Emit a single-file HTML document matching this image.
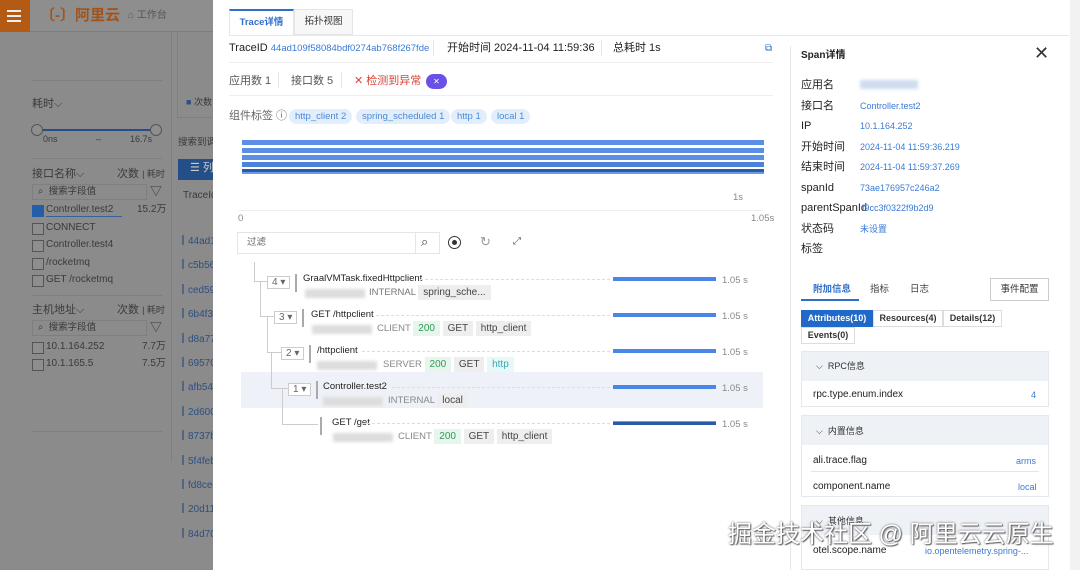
<!DOCTYPE html>
<html><head><meta charset="utf-8"><style>
*{margin:0;padding:0;box-sizing:border-box}
body{width:1080px;height:570px;overflow:hidden;position:relative;background:#8b8b8b;font-family:"Liberation Sans","Noto Sans CJK SC",sans-serif;font-size:11px;color:#333}
.a{position:absolute;white-space:nowrap;line-height:1.2}
.g{color:#3a3a3a}
.cb{width:12px;height:12px;border:1px solid #555;background:#8e8e8e}
.tag{background:#e3eefc;color:#4a8ad8;border-radius:10px;padding:2px 6px;font-size:9.5px}
.pill{background:#eee;color:#444;padding:2px 5px;font-size:10px}
.bar{position:absolute;left:613px;width:103px;height:4px;background:#4a86e8}
.dur{position:absolute;left:722px;color:#888;font-size:9.5px}
.dash{position:absolute;border-top:1px dashed #ddd;height:0}
.cnt{position:absolute;border:1px solid #ccc;font-size:10px;color:#666;padding:0 4px;height:13px;line-height:12px;background:#fff}
.blur{position:absolute;height:9px;background:#ddd;filter:blur(1.5px)}
.k{position:absolute;left:801px;font-size:11px;color:#222;line-height:14px}
.v{position:absolute;left:860px;font-size:9px;color:#3a7bd5;line-height:14px}
</style></head><body>
<div class="a" style="left:0;top:0;width:30px;height:32px;background:#b35a14"></div>
<div class="a" style="left:7px;top:10px;width:14px;height:2px;background:#eee;box-shadow:0 5px 0 #eee,0 10px 0 #eee"></div>
<div class="a" style="left:30px;top:0;width:183px;height:32px;background:#8e8e8e;border-bottom:1px solid #7d7d7d"></div>
<div class="a" style="left:40px;top:7px;font-size:15px;color:#a3531a;font-weight:bold">〔-〕阿里云</div>
<div class="a" style="left:128px;top:10px;color:#555;font-size:10px">⌂ 工作台</div>
<div class="a" style="left:32px;top:80px;width:130px;border-top:1px solid #7f7f7f"></div>
<div class="a g" style="left:32px;top:98px">耗时⌵</div>
<div class="a" style="left:37px;top:129px;width:120px;height:2px;background:#244e87"></div>
<div class="a" style="left:31px;top:124px;width:12px;height:12px;border-radius:50%;border:1px solid #555;background:#8e8e8e"></div>
<div class="a" style="left:150px;top:124px;width:12px;height:12px;border-radius:50%;border:1px solid #555;background:#8e8e8e"></div>
<div class="a g" style="left:43px;top:134px;font-size:9px">0ns</div>
<div class="a g" style="left:96px;top:134px;font-size:9px">–</div>
<div class="a g" style="left:130px;top:134px;font-size:9px">16.7s</div>
<div class="a" style="left:32px;top:158px;width:130px;border-top:1px solid #7f7f7f"></div>
<div class="a g" style="left:32px;top:168px">接口名称⌵</div>
<div class="a g" style="left:117px;top:168px">次数 <span style="font-size:9px">| 耗时</span></div>
<div class="a" style="left:32px;top:184px;width:115px;height:16px;border:1px solid #7f7f7f"></div>
<div class="a g" style="left:38px;top:186px;font-size:9.5px">⌕ &nbsp;搜索字段值</div>
<div class="a g" style="left:150px;top:184px;font-size:12px">▽</div>
<div class="a cb" style="left:32px;top:205px;background:#245ea6;border-color:#245ea6"></div>
<div class="a g" style="left:46px;top:204px;font-size:10px">Controller.test2</div><div class="a" style="left:46px;top:216px;width:76px;height:1px;background:#3a5f9a"></div>
<div class="a g" style="left:137px;top:204px;font-size:10px">15.2万</div>
<div class="a cb" style="left:32px;top:223px"></div><div class="a g" style="left:46px;top:222px;font-size:10px">CONNECT</div>
<div class="a cb" style="left:32px;top:240px"></div><div class="a g" style="left:46px;top:239px;font-size:10px">Controller.test4</div>
<div class="a cb" style="left:32px;top:258px"></div><div class="a g" style="left:46px;top:257px;font-size:10px">/rocketmq</div>
<div class="a cb" style="left:32px;top:275px"></div><div class="a g" style="left:46px;top:274px;font-size:10px">GET /rocketmq</div>
<div class="a" style="left:32px;top:295px;width:130px;border-top:1px solid #7f7f7f"></div>
<div class="a g" style="left:32px;top:304px">主机地址⌵</div>
<div class="a g" style="left:117px;top:304px">次数 <span style="font-size:9px">| 耗时</span></div>
<div class="a" style="left:32px;top:320px;width:115px;height:16px;border:1px solid #7f7f7f"></div>
<div class="a g" style="left:38px;top:322px;font-size:9.5px">⌕ &nbsp;搜索字段值</div>
<div class="a g" style="left:150px;top:320px;font-size:12px">▽</div>
<div class="a cb" style="left:32px;top:342px"></div><div class="a g" style="left:46px;top:341px;font-size:10px">10.1.164.252</div><div class="a g" style="left:142px;top:341px;font-size:10px">7.7万</div>
<div class="a cb" style="left:32px;top:359px"></div><div class="a g" style="left:46px;top:358px;font-size:10px">10.1.165.5</div><div class="a g" style="left:142px;top:358px;font-size:10px">7.5万</div>
<div class="a" style="left:32px;top:431px;width:130px;border-top:1px solid #7f7f7f"></div>
<div class="a" style="left:171px;top:32px;width:1px;height:430px;background:#7f7f7f"></div>
<div class="a" style="left:177px;top:32px;width:36px;height:86px;border-left:1px solid #7f7f7f;border-bottom:1px solid #7f7f7f"></div>
<div class="a g" style="left:186px;top:97px;font-size:9px"><span style="color:#2d4f80">■</span> 次数</div>
<div class="a g" style="left:178px;top:137px;font-size:9.5px">搜索到调</div>
<div class="a" style="left:178px;top:159px;width:35px;height:21px;background:#244e87;color:#ccc;padding:3px 0 0 12px">☰ 列</div>
<div class="a g" style="left:183px;top:190px;font-size:10px">TraceId</div>
<div class="a" style="left:178px;top:230px;width:35px;font-size:10px;line-height:24.4px;color:#2d4f80;">
<div>┃44ad1</div><div>┃c5b56</div><div>┃ced59</div><div>┃6b4f3</div><div>┃d8a77</div><div>┃69570</div><div>┃afb54</div><div>┃2d600</div><div>┃8737b</div><div>┃5f4feb</div><div>┃fd8ce</div><div>┃20d11</div><div>┃84d70</div></div>

<div class="a" style="left:213px;top:0;width:867px;height:570px;background:#fff"></div>
<div class="a" style="left:1070px;top:0;width:10px;height:570px;background:#f2f2f2"></div>
<div class="a" style="left:229px;top:35px;width:840px;border-top:1px solid #e8e8e8"></div>
<div class="a" style="left:229px;top:9px;width:65px;height:26px;border:1px solid #e5e5e5;border-top:2px solid #2f6fc9;border-bottom:none;background:#fff;color:#2f6fc9;font-size:9.5px;font-weight:bold;text-align:center;line-height:24px">Trace详情</div>
<div class="a" style="left:294px;top:9px;width:59px;height:26px;border:1px solid #e5e5e5;background:#f7f7f7;font-size:9.5px;text-align:center;line-height:24px">拓扑视图</div>
<div class="a" style="left:229px;top:42px;font-size:11px;color:#222">TraceID <span style="color:#3a7bd5;font-size:9.5px">44ad109f58084bdf0274ab768f267fde</span></div>
<div class="a" style="left:433px;top:40px;height:16px;border-left:1px solid #e5e5e5"></div>
<div class="a" style="left:447px;top:42px;font-size:11px;color:#222">开始时间 2024-11-04 11:59:36</div>
<div class="a" style="left:601px;top:40px;height:16px;border-left:1px solid #e5e5e5"></div>
<div class="a" style="left:613px;top:42px;font-size:11px;color:#222">总耗时 1s</div>
<div class="a" style="left:765px;top:43px;color:#2f6fc9;font-size:10px">⧉</div>
<div class="a" style="left:229px;top:62px;width:544px;border-top:1px solid #eee"></div>
<div class="a" style="left:229px;top:75px;font-size:11px;color:#555">应用数 1</div>
<div class="a" style="left:278px;top:72px;height:16px;border-left:1px solid #e5e5e5"></div>
<div class="a" style="left:291px;top:75px;font-size:11px;color:#555">接口数 5</div>
<div class="a" style="left:341px;top:72px;height:16px;border-left:1px solid #e5e5e5"></div>
<div class="a" style="left:354px;top:75px;font-size:11px;color:#d9433a">✕ 检测到异常</div>
<div class="a" style="left:426px;top:74px;width:21px;height:15px;border-radius:8px;background:#6a50e6;color:#fff;font-size:8px;text-align:center;line-height:15px">✕</div>
<div class="a" style="left:229px;top:95px;width:544px;border-top:1px solid #eee"></div>
<div class="a" style="left:229px;top:110px;font-size:11px;color:#666">组件标签 ⓘ</div>
<div class="a tag" style="left:289px;top:109px">http_client 2</div>
<div class="a tag" style="left:356px;top:109px">spring_scheduled 1</div>
<div class="a tag" style="left:451px;top:109px">http 1</div>
<div class="a tag" style="left:491px;top:109px">local 1</div>
<div class="a" style="left:242px;top:140px;width:522px;height:5px;background:#5b8fe6"></div>
<div class="a" style="left:242px;top:148px;width:522px;height:5px;background:#5b8fe6"></div>
<div class="a" style="left:242px;top:155px;width:522px;height:5px;background:#5b8fe6"></div>
<div class="a" style="left:242px;top:162px;width:522px;height:5px;background:#4d82dc"></div>
<div class="a" style="left:242px;top:169px;width:522px;height:3px;background:#2b5aa8"></div>
<div class="a" style="left:242px;top:172px;width:522px;height:2px;background:#6b9be8"></div>
<div class="a" style="left:733px;top:192px;font-size:9.5px;color:#888">1s</div>
<div class="a" style="left:239px;top:210px;width:524px;border-top:1px solid #eee"></div>
<div class="a" style="left:238px;top:213px;font-size:9.5px;color:#888">0</div>
<div class="a" style="left:751px;top:213px;font-size:9.5px;color:#888">1.05s</div>
<div class="a" style="left:237px;top:232px;width:203px;height:22px;border:1px solid #e5e5e5"></div>
<div class="a" style="left:415px;top:232px;height:22px;border-left:1px solid #e5e5e5"></div>
<div class="a" style="left:247px;top:237px;font-size:9.5px;color:#666">过滤</div>
<div class="a" style="left:421px;top:234px;font-size:13px;color:#444">⌕</div>
<div class="a" style="left:448px;top:236px;width:13px;height:13px;border:1.5px solid #333;border-radius:50%"></div>
<div class="a" style="left:452px;top:240px;width:5px;height:5px;background:#333;border-radius:50%"></div>
<div class="a" style="left:480px;top:234px;font-size:13px;color:#999">↻</div>
<div class="a" style="left:513px;top:236px;font-size:10px;color:#555">⤢</div>
<div class="a" style="left:241px;top:372px;width:522px;height:36px;background:#eef2f8"></div>
<div class="a" style="left:254px;top:262px;width:13px;height:20px;border-left:1px solid #ccc;border-bottom:1px solid #ccc"></div>
<div class="a" style="left:260px;top:282px;width:14px;height:35px;border-left:1px solid #ccc;border-bottom:1px solid #ccc"></div>
<div class="a" style="left:267px;top:317px;width:14px;height:36px;border-left:1px solid #ccc;border-bottom:1px solid #ccc"></div>
<div class="a" style="left:271px;top:353px;width:17px;height:36px;border-left:1px solid #ccc;border-bottom:1px solid #ccc"></div>
<div class="a" style="left:282px;top:389px;width:36px;height:36px;border-left:1px solid #ccc;border-bottom:1px solid #ccc"></div>
<div class="cnt" style="left:267px;top:276px">4 ▾</div><div class="a" style="left:295px;top:274px;height:18px;border-left:2px solid #aaa"></div>
<div class="cnt" style="left:274px;top:311px">3 ▾</div><div class="a" style="left:302px;top:309px;height:18px;border-left:2px solid #aaa"></div>
<div class="cnt" style="left:281px;top:347px">2 ▾</div><div class="a" style="left:309px;top:345px;height:18px;border-left:2px solid #aaa"></div>
<div class="cnt" style="left:288px;top:383px">1 ▾</div><div class="a" style="left:316px;top:381px;height:18px;border-left:2px solid #aaa"></div>
<div class="a" style="left:320px;top:417px;height:18px;border-left:2px solid #aaa"></div>
<div class="a" style="left:303px;top:273px;font-size:9.5px;color:#222">GraalVMTask.fixedHttpclient</div>
<div class="dash" style="left:420px;top:279px;width:190px"></div>
<div class="blur" style="left:305px;top:289px;width:60px"></div>
<div class="a" style="left:369px;top:287px;font-size:9.5px;color:#777">INTERNAL <span class="pill">spring_sche...</span></div>
<div class="a" style="left:311px;top:309px;font-size:9.5px;color:#222">GET /httpclient</div>
<div class="dash" style="left:376px;top:315px;width:234px"></div>
<div class="blur" style="left:312px;top:325px;width:60px"></div>
<div class="a" style="left:377px;top:323px;font-size:9.5px;color:#888">CLIENT <span class="pill" style="background:#e8f5ec;color:#2e9a58">200</span> <span class="pill">GET</span> <span class="pill">http_client</span></div>
<div class="a" style="left:317px;top:345px;font-size:9.5px;color:#222">/httpclient</div>
<div class="dash" style="left:362px;top:351px;width:248px"></div>
<div class="blur" style="left:317px;top:361px;width:60px"></div>
<div class="a" style="left:383px;top:359px;font-size:9.5px;color:#888">SERVER <span class="pill" style="background:#e8f5ec;color:#2e9a58">200</span> <span class="pill">GET</span> <span class="pill" style="background:#e6f8f8;color:#3aa8b0">http</span></div>
<div class="a" style="left:323px;top:381px;font-size:9.5px;color:#222">Controller.test2</div>
<div class="dash" style="left:392px;top:387px;width:218px"></div>
<div class="blur" style="left:323px;top:397px;width:60px"></div>
<div class="a" style="left:388px;top:395px;font-size:9.5px;color:#888">INTERNAL <span class="pill">local</span></div>
<div class="a" style="left:332px;top:417px;font-size:9.5px;color:#222">GET /get</div>
<div class="dash" style="left:362px;top:423px;width:248px"></div>
<div class="blur" style="left:333px;top:433px;width:60px"></div>
<div class="a" style="left:398px;top:431px;font-size:9.5px;color:#888">CLIENT <span class="pill" style="background:#e8f5ec;color:#2e9a58">200</span> <span class="pill">GET</span> <span class="pill">http_client</span></div>
<div class="bar" style="top:277px"></div><div class="dur" style="top:275px">1.05 s</div>
<div class="bar" style="top:313px"></div><div class="dur" style="top:311px">1.05 s</div>
<div class="bar" style="top:349px"></div><div class="dur" style="top:347px">1.05 s</div>
<div class="bar" style="top:385px"></div><div class="dur" style="top:383px">1.05 s</div>
<div class="bar" style="top:421px;background:#2b5aa8;border-top:1px solid #6b9be8"></div><div class="dur" style="top:419px">1.05 s</div>
<div class="a" style="left:790px;top:46px;height:524px;border-left:1px solid #e8e8e8"></div>
<div class="a" style="left:801px;top:50px;font-size:10px;font-weight:bold;color:#222">Span详情</div>
<div class="a" style="left:1034px;top:43px;font-size:18px;color:#333">✕</div>
<div class="k" style="top:78px">应用名</div><div class="blur" style="left:860px;top:80px;width:58px;background:#cfdcef"></div>
<div class="k" style="top:99px">接口名</div><div class="v" style="top:99px">Controller.test2</div>
<div class="k" style="top:119px">IP</div><div class="v" style="top:119px">10.1.164.252</div>
<div class="k" style="top:140px">开始时间</div><div class="v" style="top:140px">2024-11-04 11:59:36.219</div>
<div class="k" style="top:160px">结束时间</div><div class="v" style="top:160px">2024-11-04 11:59:37.269</div>
<div class="k" style="top:181px">spanId</div><div class="v" style="top:181px">73ae176957c246a2</div>
<div class="k" style="top:201px">parentSpanId</div><div class="v" style="top:201px;left:862px">f9cc3f0322f9b2d9</div>
<div class="k" style="top:222px">状态码</div><div class="v" style="top:222px">未设置</div>
<div class="k" style="top:242px">标签</div>
<div class="a" style="left:813px;top:284px;font-size:9.5px;color:#2f6fc9;font-weight:bold">附加信息</div>
<div class="a" style="left:801px;top:299px;width:58px;height:2px;background:#2f6fc9"></div>
<div class="a" style="left:870px;top:284px;font-size:9.5px;color:#444">指标</div>
<div class="a" style="left:910px;top:284px;font-size:9.5px;color:#444">日志</div>
<div class="a" style="left:990px;top:278px;width:59px;height:23px;border:1px solid #ccc;font-size:9.5px;text-align:center;line-height:21px;color:#333">事件配置</div>
<div class="a" style="left:801px;top:310px;width:72px;height:17px;background:#2069c9;color:#fff;font-size:9px;font-weight:bold;text-align:center;line-height:17px">Attributes(10)</div>
<div class="a" style="left:873px;top:310px;width:70px;height:17px;border:1px solid #ddd;font-size:9px;font-weight:bold;text-align:center;line-height:15px;color:#333">Resources(4)</div>
<div class="a" style="left:943px;top:310px;width:59px;height:17px;border:1px solid #ddd;font-size:9px;font-weight:bold;text-align:center;line-height:15px;color:#333">Details(12)</div>
<div class="a" style="left:801px;top:327px;width:54px;height:17px;border:1px solid #ddd;font-size:9px;font-weight:bold;text-align:center;line-height:15px;color:#333">Events(0)</div>
<div class="a" style="left:801px;top:351px;width:248px;height:56px;border:1px solid #e5e8ee"></div>
<div class="a" style="left:802px;top:352px;width:246px;height:29px;background:#eef1f6"></div>
<div class="a" style="left:816px;top:361px;font-size:9px;color:#333">⌵ &nbsp;RPC信息</div>
<div class="a" style="left:813px;top:389px;font-size:10px;color:#222">rpc.type.enum.index</div>
<div class="a" style="left:1031px;top:390px;font-size:9px;color:#3a7bd5">4</div>
<div class="a" style="left:801px;top:415px;width:248px;height:82px;border:1px solid #e5e8ee"></div>
<div class="a" style="left:802px;top:416px;width:246px;height:29px;background:#eef1f6"></div>
<div class="a" style="left:816px;top:426px;font-size:9px;color:#333">⌵ &nbsp;内置信息</div>
<div class="a" style="left:813px;top:455px;font-size:10px;color:#222">ali.trace.flag</div>
<div class="a" style="left:1016px;top:456px;font-size:9px;color:#3a7bd5">arms</div>
<div class="a" style="left:811px;top:471px;width:228px;border-top:1px solid #e5e5e5"></div>
<div class="a" style="left:813px;top:481px;font-size:10px;color:#222">component.name</div>
<div class="a" style="left:1018px;top:482px;font-size:9px;color:#3a7bd5">local</div>
<div class="a" style="left:801px;top:505px;width:248px;height:65px;border:1px solid #e5e8ee"></div>
<div class="a" style="left:802px;top:506px;width:246px;height:29px;background:#eef1f6"></div>
<div class="a" style="left:816px;top:516px;font-size:9px;color:#333">⌵ &nbsp;其他信息</div>
<div class="a" style="left:813px;top:545px;font-size:10px;color:#222">otel.scope.name</div>
<div class="a" style="left:925px;top:546px;font-size:9px;color:#3a7bd5">io.opentelemetry.spring-...</div>
<div class="a" style="left:728px;top:521px;font-size:24px;color:#fff;text-shadow:0 0 2px #555,1px 1px 1px #666">掘金技术社区 @ 阿里云云原生</div>
</body></html>
